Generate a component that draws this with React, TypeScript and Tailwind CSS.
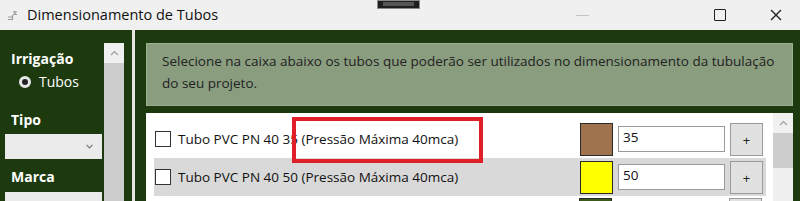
import React from "react";

const font = { fontFamily: '"Open Sans", "Noto Sans", sans-serif' };

function Row({ label, color, value, shaded }: { label: string; color: string; value: string; shaded?: boolean }) {
  return (
    <div className={`flex h-[38px] items-center pl-px pr-[3px] ${shaded ? "bg-[#d9d9d9]" : "bg-white"}`}>
      <div className="h-[16px] w-[16px] shrink-0 border border-[#333] bg-white" />
      <div className="ml-[7px] flex-1 whitespace-nowrap text-[13.5px] text-[#111]">{label}</div>
      <div className="h-[33px] w-[33px] shrink-0 border-[1.5px] border-[#2a2a2a]" style={{ backgroundColor: color }} />
      <div className="ml-[5px] h-[26px] w-[107px] shrink-0 border border-[#9a9a9a] bg-white pl-[4px] text-[13.5px] leading-[20px] text-[#111]">
        {value}
      </div>
      <div className="ml-[5px] flex h-[33px] w-[33px] shrink-0 items-center justify-center border border-[#9a9a9a] bg-[#e1e1e1] pt-[4px] text-[13px] text-[#222]">
        +
      </div>
    </div>
  );
}

export default function App() {
  return (
    <div className="relative h-[201px] w-[800px] overflow-hidden bg-[#1d3a0e]" style={font}>
      {/* title bar */}
      <div className="relative flex h-[30px] items-center bg-[#f0f0f0]">
        <svg className="ml-[7px]" width="11" height="11" viewBox="0 0 11 11" fill="none" stroke="#9a9a9a" strokeWidth="1.2">
          <path d="M1 7h4M1 9.5h4M6 2h4M6 4.5h4M5.5 5v5M8 1v4" />
        </svg>
        <span className="ml-[9px] text-[14.5px] text-[#111]">Dimensionamento de Tubos</span>
        <div className="flex-1" />
        <div className="mr-[125px] h-px w-[13px] bg-[#c4c4c4]" />
        <div className="mr-[44px] h-[12px] w-[12px] rounded-[1px] border-[1.5px] border-[#222]" />
        <svg className="mr-[18px]" width="12" height="12" viewBox="0 0 12 12" stroke="#222" strokeWidth="1.4">
          <path d="M1 1l10 10M11 1L1 11" />
        </svg>
        <div className="absolute left-[377px] top-0 h-[9px] w-[43px] border border-[#8a8a8a] bg-[#1e1e1e] px-[5px] pt-[1px]">
          <div className="h-[4px] w-full bg-[#555]" />
        </div>
      </div>

      {/* body */}
      <div className="flex h-[171px]">
        {/* left panel */}
        <div className="flex w-[132px] shrink-0">
          <div className="w-[104px] shrink-0 pl-[5px] pr-[2px]">
            <div className="ml-[6px] mt-[19px] text-[14px] font-bold leading-[20px] text-white">Irrigação</div>
            <div className="ml-[14px] mt-[3px] flex items-center">
              <div className="flex h-[12px] w-[12px] items-center justify-center rounded-full border-[2px] border-[#e8e8e8] bg-[#e8e8e8]">
                <div className="h-[6px] w-[6px] rounded-full bg-[#222]" />
              </div>
              <span className="ml-[8px] text-[14px] leading-[20px] text-white">Tubos</span>
            </div>
            <div className="ml-[6px] mt-[18px] text-[14px] font-bold leading-[20px] text-white">Tipo</div>
            <div className="mt-[4px] flex h-[25px] items-center justify-end bg-[#ebebeb] pr-[9px]">
              <svg width="7" height="5" viewBox="0 0 7 5" fill="none" stroke="#777" strokeWidth="1.2">
                <path d="M0.5 0.8L3.5 3.8L6.5 0.8" />
              </svg>
            </div>
            <div className="ml-[6px] mt-[8px] text-[14px] font-bold leading-[20px] text-white">Marca</div>
            <div className="mt-[5px] h-[25px] bg-[#ebebeb]" />
          </div>
          <div className="mt-[13px] flex w-[20px] shrink-0 flex-col">
            <div className="flex h-[20px] items-center justify-center bg-[#f0f0f0]">
              <svg width="9" height="6" viewBox="0 0 9 6" fill="none" stroke="#a0a0a0" strokeWidth="1.2">
                <path d="M1 5L4.5 1.5L8 5" />
              </svg>
            </div>
            <div className="flex-1 bg-[#cdcdcd]" />
          </div>
        </div>

        {/* divider */}
        <div className="w-[3px] shrink-0 bg-[#e6e6e6]" />

        {/* right panel */}
        <div className="flex flex-1 flex-col pl-[11px] pr-[7px] pt-[13px]">
          <div className="h-[63px] shrink-0 border border-[#9cae91] bg-[#8a9d7f] px-[15px] pt-[6px] text-[13.5px] leading-[22px] text-[#222]">
            Selecione na caixa abaixo os tubos que poderão ser utilizados no dimensionamento da tubulação do seu projeto.
          </div>
          <div className="mt-[7px] flex flex-1">
            <div className="flex-1 bg-white pl-[8px] pr-[7px] pt-[7px]">
              <Row label="Tubo PVC PN 40 35 (Pressão Máxima 40mca)" color="#a0734f" value="35" />
              <Row label="Tubo PVC PN 40 50 (Pressão Máxima 40mca)" color="#ffff00" value="50" shaded />
              <div className="flex h-[10px] pl-[425px] pt-[2px]">
                <div className="h-[10px] w-[33px] border-[1.5px] border-[#2a2a2a] bg-[#3b5a1a]" />
                <div className="ml-[117px] h-[10px] w-[33px] border border-[#9a9a9a] bg-[#e1e1e1]" />
              </div>
            </div>
            <div className="flex w-[20px] shrink-0 flex-col bg-[#f0f0f0]">
              <div className="flex h-[20px] items-center justify-center">
                <svg width="9" height="6" viewBox="0 0 9 6" fill="none" stroke="#a0a0a0" strokeWidth="1.2">
                  <path d="M1 5L4.5 1.5L8 5" />
                </svg>
              </div>
              <div className="h-[35px] bg-[#cdcdcd]" />
            </div>
          </div>
        </div>
      </div>

      {/* red highlight */}
      <div className="absolute left-[292px] top-[117px] h-[46px] w-[191px] border-[4px] border-[#e02028]" />
    </div>
  );
}
